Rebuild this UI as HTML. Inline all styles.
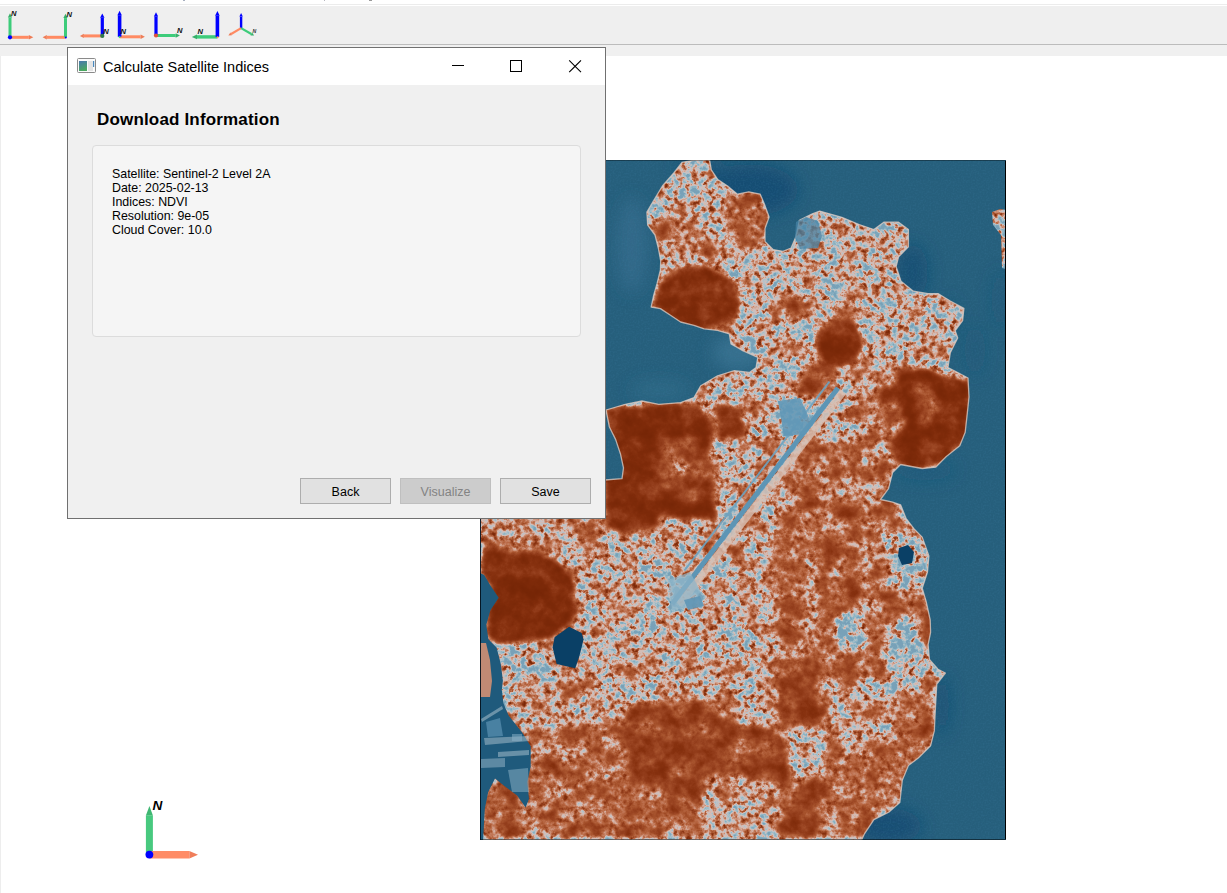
<!DOCTYPE html>
<html><head><meta charset="utf-8">
<style>
*{margin:0;padding:0;box-sizing:border-box}
html,body{width:1227px;height:893px;overflow:hidden;background:#fff;font-family:"Liberation Sans",sans-serif;position:relative}
.abs{position:absolute}
#topline{left:0;top:4px;width:1227px;height:1px;background:#ececec}
#toolbar{left:0;top:6px;width:1227px;height:38px;background:#efefef}
#tbline{left:0;top:44px;width:1227px;height:1px;background:#bcbcbc}
#strip{left:0;top:45px;width:1227px;height:11px;background:#f0f0f0}
#leftcol{left:0;top:56px;width:1px;height:837px;background:#ededed}
#map{left:480px;top:160px;width:526px;height:680px}
#dlg{left:67px;top:47px;width:539px;height:472px;border:1px solid #707070;background:#f0f0f0}
#title{left:0;top:0;width:537px;height:37px;background:#fff}
#ttext{left:35px;top:11px;font-size:14.5px;color:#000;white-space:nowrap}
#h{left:29px;top:61.5px;font-size:17px;font-weight:bold;letter-spacing:0.17px;color:#000;white-space:nowrap}
#box{left:24px;top:97px;width:489px;height:192px;border:1px solid #dcdcdc;border-radius:4px;background:#f5f5f5}
#info{left:19px;top:20.5px;font-size:12.4px;line-height:14px;color:#000;white-space:nowrap}
.btn{top:430px;width:91px;height:26px;border:1px solid #adadad;background:#e1e1e1;font-size:12.5px;text-align:center;line-height:27px;color:#000}
.btn.dis{border-color:#bfbfbf;background:#cccccc;color:#838383}
</style></head><body>
<div class="abs" id="topline"></div>
<div class="abs" style="left:183px;top:0;width:2px;height:1px;background:#a8b0c0"></div><div class="abs" style="left:324px;top:0;width:1px;height:1px;background:#b8b8c0"></div><div class="abs" style="left:369px;top:0;width:3px;height:1px;background:#9a9a9a"></div>
<div class="abs" id="toolbar"></div>
<div class="abs" id="tbline"></div>
<div class="abs" id="strip"></div>
<div class="abs" id="leftcol"></div>

<svg class="abs" id="icons" style="left:0;top:0" width="270" height="45" viewBox="0 0 270 45"><polygon points="11.50,37.30 11.50,17.60 8.50,17.60 8.50,37.30" fill="#3dcc7a"/><polygon points="12.10,17.60 10.00,13.30 7.90,17.60" fill="#36b06a"/><polygon points="10.00,38.80 28.80,38.80 28.80,35.80 10.00,35.80" fill="#ff8a62"/><polygon points="28.80,39.60 33.30,37.30 28.80,35.00" fill="#ee7c56"/><circle cx="10" cy="37.3" r="2.1" fill="#0000ff"/><text x="11.0" y="15.6" font-family="Liberation Sans" font-weight="bold" font-style="italic" font-size="7.6" fill="#111">N</text><polygon points="65.50,35.80 46.80,35.80 46.80,38.80 65.50,38.80" fill="#ff8a62"/><polygon points="46.80,35.00 42.60,37.30 46.80,39.60" fill="#ee7c56"/><polygon points="67.00,37.30 67.00,18.10 64.00,18.10 64.00,37.30" fill="#3dcc7a"/><polygon points="67.60,18.10 65.50,13.80 63.40,18.10" fill="#36b06a"/><circle cx="65.8" cy="37.6" r="1.0" fill="#0000ff"/><text x="66.6" y="16.8" font-family="Liberation Sans" font-weight="bold" font-style="italic" font-size="7.6" fill="#111">N</text><polygon points="102.30,34.40 83.90,34.40 83.90,37.40 102.30,37.40" fill="#ff8a62"/><polygon points="83.90,33.70 79.90,35.90 83.90,38.10" fill="#ee7c56"/><polygon points="103.90,35.90 103.90,17.70 100.70,17.70 100.70,35.90" fill="#0000ff"/><polygon points="104.50,17.70 102.30,13.50 100.10,17.70" fill="#0000ff"/><circle cx="102.3" cy="35.9" r="2.1" fill="#2d7a4a"/><text x="103.3" y="33.8" font-family="Liberation Sans" font-weight="bold" font-style="italic" font-size="7.6" fill="#111">N</text><polygon points="119.60,38.30 140.60,38.30 140.60,35.30 119.60,35.30" fill="#ff8a62"/><polygon points="140.60,39.10 144.90,36.80 140.60,34.50" fill="#ee7c56"/><polygon points="121.40,36.80 121.40,15.20 117.80,15.20 117.80,36.80" fill="#0000ff"/><polygon points="121.80,15.20 119.60,10.80 117.40,15.20" fill="#0000ff"/><circle cx="119.6" cy="37.0" r="1.0" fill="#3dcc7a"/><text x="120.4" y="34.2" font-family="Liberation Sans" font-weight="bold" font-style="italic" font-size="7.6" fill="#111">N</text><polygon points="156.00,37.00 175.70,37.00 175.70,34.00 156.00,34.00" fill="#3dcc7a"/><polygon points="175.70,37.70 179.90,35.50 175.70,33.30" fill="#36b06a"/><polygon points="157.60,35.50 157.60,16.40 154.40,16.40 154.40,35.50" fill="#0000ff"/><polygon points="158.10,16.40 156.00,12.20 153.90,16.40" fill="#0000ff"/><circle cx="156" cy="35.5" r="2.1" fill="#e0553a"/><text x="176.9" y="33.3" font-family="Liberation Sans" font-weight="bold" font-style="italic" font-size="7.6" fill="#111">N</text><polygon points="217.40,35.20 197.00,35.20 197.00,38.60 217.40,38.60" fill="#3dcc7a"/><polygon points="197.00,34.50 191.80,36.90 197.00,39.30" fill="#36b06a"/><polygon points="219.20,36.90 219.20,15.80 215.60,15.80 215.60,36.90" fill="#0000ff"/><polygon points="219.70,15.80 217.40,10.90 215.10,15.80" fill="#0000ff"/><circle cx="217.6" cy="37.2" r="1.0" fill="#ff8a62"/><text x="197.6" y="34.4" font-family="Liberation Sans" font-weight="bold" font-style="italic" font-size="7.6" fill="#111">N</text><polygon points="242.30,28.30 242.30,16.60 239.90,16.60 239.90,28.30" fill="#0000ff"/><polygon points="242.80,16.60 241.10,13.10 239.40,16.60" fill="#0000ff"/><polygon points="240.54,27.15 230.60,33.03 231.71,34.92 241.66,29.05" fill="#ff8a62"/><polygon points="230.34,32.60 228.40,35.60 231.97,35.35" fill="#ee7c56"/><polygon points="240.55,29.05 250.78,34.95 251.88,33.05 241.65,27.15" fill="#3dcc7a"/><polygon points="250.53,35.39 254.10,35.60 252.13,32.61" fill="#36b06a"/><text x="252.5" y="32.8" font-family="Liberation Sans" font-weight="bold" font-style="italic" font-size="5.2" fill="#333">N</text></svg>

<svg class="abs" id="map" width="526" height="680" viewBox="0 0 526 680">
<defs><filter id="landf" x="0" y="0" width="526" height="680" filterUnits="userSpaceOnUse" color-interpolation-filters="sRGB">
  <feGaussianBlur in="SourceGraphic" stdDeviation="3" result="b0"/>
  <feTurbulence type="fractalNoise" baseFrequency="0.05" numOctaves="2" seed="11" result="q0"/>
  <feColorMatrix in="q0" type="matrix" values="1 0 0 0 0  1 0 0 0 0  1 0 0 0 0  0 0 0 0 1" result="q"/>
  <feComponentTransfer in="b0" result="m0"><feFuncR type="linear" slope="-3.5" intercept="2.0"/><feFuncG type="linear" slope="-3.5" intercept="2.0"/><feFuncB type="linear" slope="-3.5" intercept="2.0"/><feFuncA type="linear" slope="0" intercept="1"/></feComponentTransfer>
  <feComposite in="m0" in2="q" operator="arithmetic" k1="0.45" k2="-0.225" k3="0" k4="0.5" result="rq"/>
  <feComposite in="b0" in2="rq" operator="arithmetic" k1="0" k2="1" k3="1" k4="-0.5" result="b1"/>
  <feComposite in="b1" in2="q" operator="arithmetic" k1="0" k2="1" k3="0.3" k4="-0.15" result="b"/>
  <feComponentTransfer in="b" result="m"><feFuncR type="linear" slope="-3.5" intercept="2.0"/><feFuncG type="linear" slope="-3.5" intercept="2.0"/><feFuncB type="linear" slope="-3.5" intercept="2.0"/><feFuncA type="linear" slope="0" intercept="1"/></feComponentTransfer>
  <feTurbulence type="fractalNoise" baseFrequency="0.17" numOctaves="3" seed="7" result="n0"/>
  <feColorMatrix in="n0" type="matrix" values="1 0 0 0 0  1 0 0 0 0  1 0 0 0 0  0 0 0 0 1" result="n"/>
  <feComposite in="m" in2="n" operator="arithmetic" k1="1.3" k2="-0.65" k3="0" k4="0.5" result="r"/>
  <feComposite in="b" in2="r" operator="arithmetic" k1="0" k2="1" k3="1" k4="-0.5" result="v1"/>
  <feComposite in="v1" in2="n" operator="arithmetic" k1="0" k2="1" k3="0.12" k4="-0.06" result="v"/>
  <feComponentTransfer in="v">
    <feFuncR type="table" tableValues="0.471 0.502 0.541 0.588 0.647 0.725 0.804 0.843 0.816 0.769 0.722 0.659 0.588 0.533 0.498 0.478 0.463 0.451 0.443 0.435 0.431"/>
    <feFuncG type="table" tableValues="0.635 0.667 0.694 0.722 0.745 0.761 0.753 0.729 0.620 0.494 0.408 0.329 0.251 0.196 0.169 0.157 0.149 0.145 0.141 0.137 0.133"/>
    <feFuncB type="table" tableValues="0.725 0.745 0.765 0.776 0.784 0.784 0.745 0.690 0.541 0.376 0.267 0.180 0.118 0.063 0.039 0.031 0.024 0.024 0.020 0.020 0.020"/>
    <feFuncA type="linear" slope="0" intercept="1"/>
  </feComponentTransfer>
</filter><filter id="wblur" x="-50%" y="-50%" width="200%" height="200%"><feGaussianBlur stdDeviation="8"/></filter>
<filter id="wnoise" x="0" y="0" width="526" height="680" filterUnits="userSpaceOnUse" color-interpolation-filters="sRGB">
  <feTurbulence type="fractalNoise" baseFrequency="0.6" numOctaves="1" seed="2"/>
  <feColorMatrix type="matrix" values="0 0 0 0 0.25  0 0 0 0 0.5  0 0 0 0 0.65  0.5 0 0 0 -0.2"/>
</filter><clipPath id="lc"><polygon points="0.0,680.0 0.0,340.0 125.0,320.0 142.0,318.7 143.5,307.8 140.4,293.7 135.7,279.6 129.4,267.0 126.0,250.0 145.2,244.3 162.0,241.0 178.8,244.3 200.6,242.6 214.0,237.6 220.7,225.8 237.5,215.8 254.3,210.7 269.4,212.4 276.1,207.4 277.8,197.3 262.7,190.6 251.0,183.9 249.3,173.8 237.5,170.4 224.1,168.8 214.0,165.4 200.6,162.0 190.5,155.3 180.4,148.6 171.2,147.0 173.7,135.2 177.1,123.4 180.4,110.0 180.7,101.0 178.3,88.0 175.0,75.0 167.7,65.2 166.9,52.2 172.6,42.4 182.4,26.0 193.8,13.0 202.0,2.4 215.0,0.0 229.6,0.0 231.3,9.8 237.8,19.6 247.6,26.0 257.4,34.2 268.8,31.8 280.2,34.2 285.0,45.6 289.1,57.0 285.0,68.5 285.0,81.5 293.2,89.6 303.0,91.3 311.1,88.0 316.0,76.6 319.3,60.3 332.3,53.8 339.7,51.1 361.9,57.3 379.1,64.6 393.9,69.6 403.8,62.2 418.6,62.2 428.4,69.6 428.4,86.8 418.6,96.7 416.1,106.5 421.0,121.3 433.4,131.2 448.1,133.6 458.0,133.6 470.3,141.0 483.9,148.4 482.6,160.7 475.2,170.6 477.7,178.0 470.3,192.8 467.9,207.6 477.7,212.5 488.0,218.0 489.0,237.0 487.0,256.0 485.2,272.3 479.8,285.7 466.3,296.5 455.6,307.2 442.2,308.5 420.6,304.5 412.6,312.6 408.5,328.7 400.5,339.5 412.6,342.2 420.6,344.8 426.0,358.3 434.1,369.0 442.2,377.1 448.9,395.9 447.5,412.0 442.2,428.2 446.2,441.6 450.2,460.0 450.6,472.3 448.1,484.6 449.4,499.4 458.0,509.3 465.4,513.0 456.8,524.1 455.5,546.2 454.3,570.9 450.6,585.7 438.3,598.0 428.4,605.4 422.3,620.2 419.8,642.4 408.7,652.2 393.9,659.6 384.1,674.4 381.6,680.0"/><polygon points="512.0,52.0 520.0,49.0 526.0,50.0 526.0,109.0 522.0,108.0 521.0,75.0 513.0,65.0"/></clipPath></defs>
<rect x="0" y="0" width="526" height="680" fill="#265f7c"/>
<g filter="url(#wblur)">
<ellipse cx="270" cy="30" rx="48" ry="26" fill="#0c4670" opacity="0.75"/>
<ellipse cx="220" cy="8" rx="25" ry="12" fill="#134f76" opacity="0.5"/>
<ellipse cx="432" cy="112" rx="16" ry="28" fill="#0d4870" opacity="0.7"/>
<ellipse cx="468" cy="158" rx="10" ry="18" fill="#124d74" opacity="0.5"/>
<ellipse cx="408" cy="666" rx="34" ry="18" fill="#0c4670" opacity="0.7"/>
<ellipse cx="445" cy="310" rx="30" ry="10" fill="#1a5779" opacity="0.5"/>
<ellipse cx="152" cy="85" rx="16" ry="48" fill="#3d7898" opacity="0.45"/>
<ellipse cx="258" cy="192" rx="26" ry="18" fill="#4a85a3" opacity="0.45"/>
<ellipse cx="180" cy="230" rx="30" ry="10" fill="#3f7a99" opacity="0.35"/>
<ellipse cx="520" cy="140" rx="8" ry="30" fill="#1c5678" opacity="0.4"/>
<ellipse cx="462" cy="545" rx="8" ry="30" fill="#0d4870" opacity="0.6"/>
<ellipse cx="495" cy="190" rx="10" ry="25" fill="#1a5578" opacity="0.4"/>
</g>
<rect x="0" y="0" width="526" height="680" fill="#000" filter="url(#wnoise)"/>
<g clip-path="url(#lc)"><g filter="url(#landf)">
<rect x="0" y="0" width="526" height="680" fill="rgb(97,97,97)"/>
<polygon points="160.0,0.0 526.0,0.0 526.0,230.0 280.0,230.0 160.0,170.0" fill="rgb(88,88,88)"/>
<polygon points="169.0,58.0 192.0,54.0 220.0,64.0 225.0,88.0 202.0,96.0 175.0,92.0" fill="rgb(120,120,120)"/>
<polygon points="242.0,35.0 268.0,30.0 284.0,37.0 288.0,58.0 284.0,85.0 262.0,90.0 244.0,76.0" fill="rgb(135,135,135)"/>
<polygon points="290.0,132.0 320.0,128.0 328.0,145.0 320.0,162.0 292.0,160.0" fill="rgb(118,118,118)"/>
<polygon points="305.0,290.0 380.0,280.0 420.0,310.0 410.0,345.0 360.0,355.0 310.0,345.0" fill="rgb(125,125,125)"/>
<polygon points="296.0,350.0 370.0,340.0 410.0,345.0 445.0,390.0 450.0,480.0 455.0,540.0 450.0,585.0 420.0,630.0 382.0,680.0 0.0,680.0 0.0,570.0 40.0,568.0 120.0,570.0 160.0,545.0 220.0,540.0 280.0,520.0 300.0,480.0 290.0,400.0" fill="rgb(128,128,128)"/>
<polygon points="375.0,215.0 405.0,212.0 410.0,260.0 400.0,290.0 378.0,280.0" fill="rgb(122,122,122)"/>
<polygon points="0.0,358.0 125.0,358.0 125.0,385.0 60.0,392.0 0.0,390.0" fill="rgb(112,112,112)"/>
<polygon points="125.0,247.0 175.0,245.0 220.0,242.0 232.0,274.0 228.0,304.0 236.0,358.0 125.0,358.0" fill="rgb(172,172,172)"/>
<polygon points="175.0,280.0 210.0,274.0 232.0,302.0 234.0,338.0 204.0,345.0 172.0,318.0" fill="rgb(150,150,150)"/>
<polygon points="182.0,288.0 192.0,284.0 208.0,308.0 200.0,316.0" fill="rgb(120,120,120)"/>
<polygon points="125.0,340.0 180.0,345.0 175.0,368.0 150.0,372.0 125.0,368.0" fill="rgb(165,165,165)"/>
<polygon points="0.0,390.0 39.0,392.0 66.0,396.0 85.0,409.0 95.0,425.0 93.0,459.0 73.0,477.0 60.0,481.0 19.0,485.0 8.0,475.0 6.0,463.0 10.0,448.0 15.0,438.0 6.0,421.0 0.0,413.0" fill="rgb(175,175,175)"/>
<polygon points="337.0,170.0 350.0,158.0 375.0,160.0 383.0,180.0 377.0,205.0 350.0,208.0 336.0,195.0" fill="rgb(170,170,170)"/>
<polygon points="400.0,240.0 420.0,212.0 445.0,208.0 470.0,216.0 490.0,222.0 486.0,280.0 470.0,298.0 445.0,310.0 420.0,306.0 405.0,285.0" fill="rgb(172,172,172)"/>
<polygon points="435.0,225.0 450.0,220.0 458.0,240.0 455.0,265.0 440.0,268.0 432.0,245.0" fill="rgb(148,148,148)"/>
<polygon points="400.0,245.0 420.0,240.0 425.0,270.0 405.0,280.0" fill="rgb(125,125,125)"/>
<polygon points="175.0,130.0 192.0,108.0 225.0,106.0 255.0,120.0 260.0,145.0 245.0,165.0 210.0,168.0 180.0,158.0 172.0,145.0" fill="rgb(168,168,168)"/>
<polygon points="318.0,206.0 355.0,204.0 356.0,234.0 320.0,236.0" fill="rgb(138,138,138)"/>
<polygon points="236.0,246.0 262.0,246.0 264.0,278.0 238.0,280.0" fill="rgb(158,158,158)"/>
<polygon points="232.0,388.0 260.0,383.0 266.0,410.0 235.0,412.0" fill="rgb(155,155,155)"/>
<polygon points="274.0,512.0 334.0,512.0 342.0,580.0 338.0,680.0 274.0,680.0 268.0,600.0" fill="rgb(150,150,150)"/>
<polygon points="145.0,545.0 210.0,540.0 255.0,560.0 258.0,610.0 220.0,640.0 150.0,630.0" fill="rgb(150,150,150)"/>
<polygon points="223.0,620.0 265.0,612.0 300.0,630.0 300.0,680.0 225.0,680.0" fill="rgb(100,100,100)"/>
<polygon points="249.0,510.0 295.0,508.0 300.0,565.0 255.0,568.0" fill="rgb(96,96,96)"/>
<polygon points="303.0,573.0 340.0,568.0 346.0,612.0 315.0,622.0" fill="rgb(70,70,70)"/>
<polygon points="345.0,522.0 400.0,518.0 420.0,540.0 410.0,585.0 360.0,588.0" fill="rgb(100,100,100)"/>
<polygon points="405.0,462.0 435.0,458.0 448.0,500.0 442.0,530.0 410.0,530.0" fill="rgb(60,60,60)"/>
<polygon points="403.0,375.0 435.0,368.0 446.0,400.0 440.0,428.0 408.0,425.0" fill="rgb(60,60,60)"/>
<polygon points="17.0,485.0 68.0,483.0 70.0,516.0 20.0,518.0" fill="rgb(65,65,65)"/>
<polygon points="160.0,372.0 220.0,370.0 280.0,415.0 296.0,480.0 275.0,520.0 220.0,535.0 160.0,540.0 120.0,530.0 105.0,490.0 110.0,440.0" fill="rgb(92,92,92)"/>
<polygon points="40.0,520.0 120.0,512.0 160.0,540.0 120.0,568.0 50.0,565.0" fill="rgb(100,100,100)"/>
<polygon points="355.0,458.0 375.0,452.0 388.0,470.0 382.0,492.0 358.0,488.0" fill="rgb(30,30,30)"/>
<polygon points="298.0,240.0 325.0,238.0 332.0,272.0 302.0,276.0" fill="rgb(35,35,35)"/>
<polygon points="188.0,415.0 220.0,412.0 222.0,446.0 190.0,450.0" fill="rgb(40,40,40)"/>
</g></g>
<polygon points="0.0,680.0 0.0,340.0 125.0,320.0 142.0,318.7 143.5,307.8 140.4,293.7 135.7,279.6 129.4,267.0 126.0,250.0 145.2,244.3 162.0,241.0 178.8,244.3 200.6,242.6 214.0,237.6 220.7,225.8 237.5,215.8 254.3,210.7 269.4,212.4 276.1,207.4 277.8,197.3 262.7,190.6 251.0,183.9 249.3,173.8 237.5,170.4 224.1,168.8 214.0,165.4 200.6,162.0 190.5,155.3 180.4,148.6 171.2,147.0 173.7,135.2 177.1,123.4 180.4,110.0 180.7,101.0 178.3,88.0 175.0,75.0 167.7,65.2 166.9,52.2 172.6,42.4 182.4,26.0 193.8,13.0 202.0,2.4 215.0,0.0 229.6,0.0 231.3,9.8 237.8,19.6 247.6,26.0 257.4,34.2 268.8,31.8 280.2,34.2 285.0,45.6 289.1,57.0 285.0,68.5 285.0,81.5 293.2,89.6 303.0,91.3 311.1,88.0 316.0,76.6 319.3,60.3 332.3,53.8 339.7,51.1 361.9,57.3 379.1,64.6 393.9,69.6 403.8,62.2 418.6,62.2 428.4,69.6 428.4,86.8 418.6,96.7 416.1,106.5 421.0,121.3 433.4,131.2 448.1,133.6 458.0,133.6 470.3,141.0 483.9,148.4 482.6,160.7 475.2,170.6 477.7,178.0 470.3,192.8 467.9,207.6 477.7,212.5 488.0,218.0 489.0,237.0 487.0,256.0 485.2,272.3 479.8,285.7 466.3,296.5 455.6,307.2 442.2,308.5 420.6,304.5 412.6,312.6 408.5,328.7 400.5,339.5 412.6,342.2 420.6,344.8 426.0,358.3 434.1,369.0 442.2,377.1 448.9,395.9 447.5,412.0 442.2,428.2 446.2,441.6 450.2,460.0 450.6,472.3 448.1,484.6 449.4,499.4 458.0,509.3 465.4,513.0 456.8,524.1 455.5,546.2 454.3,570.9 450.6,585.7 438.3,598.0 428.4,605.4 422.3,620.2 419.8,642.4 408.7,652.2 393.9,659.6 384.1,674.4 381.6,680.0" fill="none" stroke="#e2cfc6" stroke-width="1.3" opacity="0.75" stroke-linejoin="round"/>
<line x1="363.2" y1="232.0" x2="199.2" y2="445.0" stroke="#d8c0b4" stroke-width="7" opacity="0.8"/>
<line x1="358.0" y1="228.0" x2="192.0" y2="444.0" stroke="#5d95b5" stroke-width="5"/>
<line x1="349.4" y1="221.7" x2="204.4" y2="410.7" stroke="#6fa3c0" stroke-width="2" opacity="0.9"/>
<polygon points="298.0,241.0 320.0,238.0 330.0,260.0 326.0,274.0 304.0,276.0" fill="#5f96b6" opacity="0.85"/>
<polygon points="188.0,420.0 210.0,412.0 220.0,430.0 215.0,447.0 192.0,450.0" fill="#8fb5c9" opacity="0.7"/>
<polygon points="204.0,440.0 220.0,436.0 224.0,446.0 208.0,450.0" fill="#5f96b6" opacity="0.9"/>
<polygon points="316.0,62.0 326.0,57.0 338.0,61.0 342.0,76.0 338.0,88.0 320.0,89.0 315.0,78.0" fill="#4683a5" opacity="0.75"/>
<polygon points="0.0,413.0 4.2,415.0 10.4,425.4 18.7,437.8 10.4,450.3 6.3,464.8 8.4,479.3 16.6,487.6 20.8,504.0 22.9,520.7 21.8,530.0 23.5,543.6 28.6,555.5 42.2,572.5 50.7,586.2 50.7,606.6 47.3,621.9 49.0,638.9 45.6,647.4 37.1,635.5 23.5,625.3 15.0,618.5 8.2,632.0 4.8,649.0 3.1,680.0 0.0,680.0" fill="#1f5a7c"/>
<polygon points="1.0,559.0 22.0,546.0 23.0,549.0 2.0,562.0" fill="#c8d6de" opacity="0.45"/>
<polygon points="4.0,578.0 49.0,576.0 49.0,581.0 5.0,585.0" fill="#bfd0da" opacity="0.45"/>
<polygon points="18.0,592.0 49.0,590.0 49.0,595.0 18.0,597.0" fill="#c2d2dc" opacity="0.45"/>
<polygon points="1.0,599.0 25.0,598.0 25.0,607.0 1.0,608.0" fill="#a9c3d3" opacity="0.45"/>
<polygon points="28.0,610.0 48.0,608.0 49.0,632.0 32.0,632.0" fill="#8fb3c8" opacity="0.5"/>
<polygon points="32.0,574.0 42.0,574.0 42.0,581.0 32.0,581.0" fill="#8db4ca" opacity="0.5"/>
<polygon points="6.0,562.0 20.0,558.0 23.0,576.0 8.0,577.0" fill="#5b92b2" opacity="0.7"/>
<polygon points="0.0,483.0 6.0,483.0 10.0,500.0 12.0,521.0 10.0,537.0 0.0,537.0" fill="#c08a74"/>
<polygon points="74.6,477.2 89.1,466.8 101.6,473.0 103.6,479.3 99.5,495.8 95.3,508.3 76.7,504.1 72.6,487.6" fill="#0a4066"/>
<polygon points="419.0,388.0 428.0,385.0 434.0,392.0 432.0,403.0 422.0,405.0 418.0,396.0" fill="#0a4066"/>
<rect x="0" y="0" width="526" height="1" fill="#000" opacity="0.35"/>
<rect x="0" y="679" width="526" height="1" fill="#000" opacity="0.5"/>
<rect x="0" y="0" width="1" height="680" fill="#02101c" opacity="0.9"/>
<rect x="525" y="1" width="1" height="678" fill="#000"/>
</svg>

<svg class="abs" id="axis" style="left:130px;top:790px" width="80" height="80" viewBox="130 790 80 80"><polygon points="152.90,854.60 152.90,815.40 145.90,815.40 145.90,854.60" fill="#48c97f"/><polygon points="152.90,815.40 149.40,806.00 145.90,815.40" fill="#3fb772"/><polygon points="149.40,858.55 189.40,858.55 189.40,851.05 149.40,851.05" fill="#ff8c66"/><polygon points="189.40,858.55 198.00,854.80 189.40,851.05" fill="#f07e5a"/><circle cx="149.4" cy="854.6" r="3.9" fill="#0000ff"/><text x="152.6" y="810.2" font-family="Liberation Sans" font-weight="bold" font-style="italic" font-size="13.6" fill="#000">N</text></svg>

<div class="abs" id="dlg">
  <div class="abs" id="title">
    <div class="abs" id="ttext">Calculate Satellite Indices</div>
    <svg class="abs" style="left:0;top:0" width="537" height="37" viewBox="68 48 537 37">
      <rect x="77.5" y="58.5" width="18" height="14" fill="#fbfbfb" stroke="#8a8a8a" stroke-width="1" rx="1"/>
      <defs><linearGradient id="ig" x1="0" y1="0" x2="0.3" y2="1"><stop offset="0" stop-color="#4a78b0"/><stop offset="1" stop-color="#4aa860"/></linearGradient></defs>
      <rect x="79" y="61" width="8" height="10" fill="url(#ig)"/>
      <rect x="88" y="61" width="5" height="10" fill="#e4e4e4"/>
      <rect x="93" y="61" width="1.2" height="6" fill="#4a8ac0"/>
      <rect x="452" y="65" width="12" height="1" fill="#000"/>
      <rect x="510.5" y="60.5" width="11" height="11" fill="none" stroke="#000" stroke-width="1"/>
      <path d="M569.2 60.4 L581 72.2 M581 60.4 L569.2 72.2" stroke="#000" stroke-width="1.1" fill="none"/>
    </svg>
  </div>
  <div class="abs" id="h">Download Information</div>
  <div class="abs" id="box">
    <div class="abs" id="info">Satellite: Sentinel-2 Level 2A<br>Date: 2025-02-13<br>Indices: NDVI<br>Resolution: 9e-05<br>Cloud Cover: 10.0</div>
  </div>
  <div class="abs btn" style="left:232px">Back</div>
  <div class="abs btn dis" style="left:332px">Visualize</div>
  <div class="abs btn" style="left:432px">Save</div>
</div>
</body></html>
